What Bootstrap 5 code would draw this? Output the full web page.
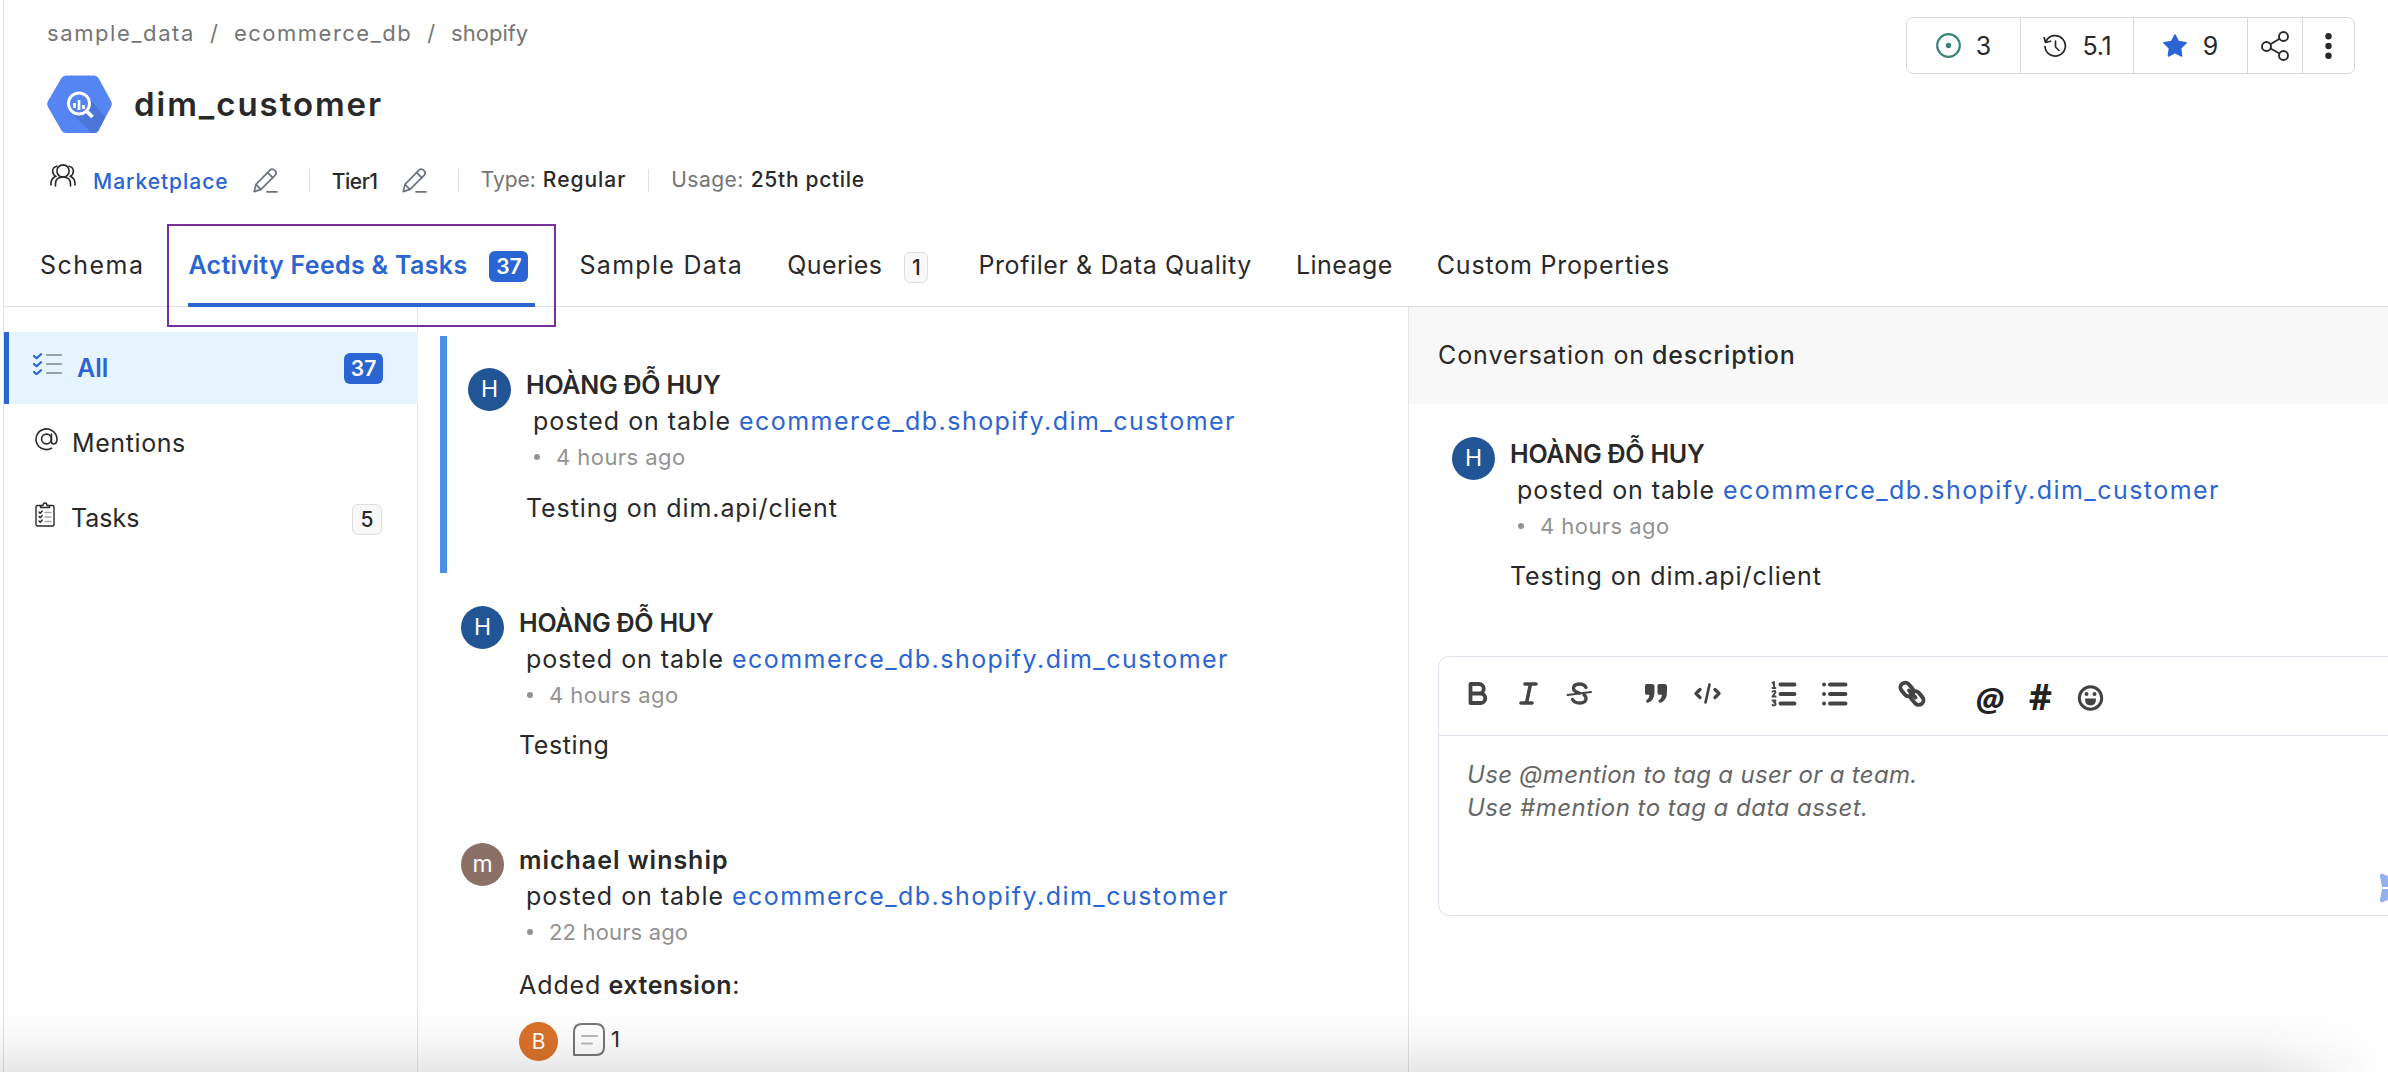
<!DOCTYPE html>
<html lang="en">
<head>
<meta charset="utf-8">
<meta name="viewport" content="width=device-width, initial-scale=1">
<title>dim_customer</title>
<link href="https://cdn.jsdelivr.net/npm/bootstrap@5.3.0/dist/css/bootstrap.min.css" rel="stylesheet">
<style>
  :root { --ink:#292929; --brand:#2b65d3; --line:#e0e0e0; --muted:#757575; }
  body { font-family:Inter,"Noto Sans",sans-serif; font-size:25px; line-height:36px; color:var(--ink); background:#fff; overflow:hidden; }
  svg { display:block; flex:none; }
  .app-shell { height:1072px; margin-left:3px; border-left:1px solid var(--line); }
  .page-head { height:224px; padding:15px 33px 0 43px; }
  .crumbs { font-size:22px; color:var(--muted); height:60px; }
  .crumbs .slash { margin:0 16px 0 15px; }
  .asset-title { font-size:33px; font-weight:600; letter-spacing:1.95px; margin:0 0 0 22px; line-height:58px; }
  .meta-row { font-size:21px; height:40px; margin-top:27px; line-height:40px; white-space:nowrap; }
  .meta-row .rule { width:1px; height:23px; background:var(--line); margin:0 22px; flex:none; }
  .meta-row .rule.wide { margin-left:31px; }
  .meta-row .label { color:var(--muted); }
  .meta-row .owner { color:var(--brand); margin-left:17px; }
  .semi { font-weight:500; }
  .stat-group { height:57px; margin-top:2px; border:1px solid #d9d9d9; border-radius:7px; }
  .stat-group > div { border-right:1px solid #d9d9d9; }
  .stat-group > div:last-child { border-right:0; }
  .s-a { width:114px; gap:15px; } .s-b { width:113px; gap:16px; } .s-c { width:114px; gap:16px; } .s-d { width:55px; } .s-e { width:51px; }
  .tab-bar { height:83px; border-bottom:1px solid var(--line); padding-left:36px; gap:44px; flex-wrap:nowrap; }
  .tab-bar .nav-link { padding:0; height:82px; color:var(--ink); white-space:nowrap; display:flex; align-items:center; position:relative; }
  .tab-bar .nav-link.active { color:var(--brand); font-weight:600; }
  .tab-bar .nav-link.active::after { content:""; position:absolute; left:0; right:0; bottom:-1px; height:4px; background:var(--brand); }
  .highlight-box { position:absolute; left:-21px; top:0; width:389px; height:103px; border:2px solid #76309b; z-index:3; }
  .count { font-size:21px; line-height:31px; height:31px; border-radius:6px; text-align:center; font-weight:600; flex:none; }
  .count.on { background:var(--brand); color:#fff; width:39px; }
  .count.off { background:#f8f8f8; border:1px solid #dedede; color:var(--ink); line-height:29px; font-weight:500; }
  .side-nav { width:414px; padding-top:25px; border-right:1px solid #e4e4e4; gap:3px; flex:none; }
  .side-nav a { height:72px; color:var(--ink); text-decoration:none; padding:0 35px 0 31px; }
  .side-nav a.current { background:#e6f4ff; border-left:5px solid var(--brand); color:var(--brand); font-weight:600; padding-left:24px; margin-right:-1px; }
  .side-nav a > span:not(.count) { margin-top:-1px; }
  .feed { width:990px; padding:29px 0 0 22px; flex:none; }
  .post { height:237.5px; padding:31px 0 0 21px; gap:15px; white-space:nowrap; }
  .post.chosen { border-left:7px solid #4a90e8; height:237px; margin-bottom:.5px; }
  .avatar { width:43px; height:43px; border-radius:50%; color:#fff; font-size:23px; line-height:43px; text-align:center; background:#225595; flex:none; margin-top:1px; }
  .avatar.brown { background:#8a7066; }
  .avatar.orange { background:#db732b; width:39px; height:39px; line-height:39px; font-size:21px; margin-top:0; }
  .post-name { font-weight:600; }
  .post-line { padding-left:7px; }
  .post-line a { color:var(--brand); text-decoration:none; margin-left:8px; }
  .post-time { font-size:22px; color:#929292; padding-left:8px; }
  .post-time i { width:6px; height:6px; border-radius:50%; background:#929292; margin-right:16px; }
  .post-body { margin-top:14.5px; }
  .thread { border-left:1px solid #e4e4e4; min-width:0; }
  .thread-head { height:97px; background:#f8f8f8; padding-left:29px; line-height:97px; }
  .thread .post { height:252px; padding:32px 0 0 43px; }
  .thread .post-body { margin-top:13.5px; }
  .editor { height:260px; margin:0 -20px 0 29px; border:1px solid #dde1e9; border-radius:11px; }
  .toolbar { height:79px; border-bottom:1px solid #dde1e9; padding:1px 0 0 13px; }
  .tool { width:51px; display:flex; justify-content:center; align-items:center; }
  .tool-set { display:flex; margin-right:26px; }
  .tool svg { stroke:#444; fill:none; stroke-linecap:round; stroke-linejoin:round; }
  .tool .solid { fill:#444; stroke:none; }
  .glyph { font:700 33px/40px "Noto Sans","Open Sans",sans-serif; color:#222; }
  .glyph.hash { font-size:36px; }
  .hint { font-size:24px; line-height:33px; font-style:italic; color:#666; padding:22px 0 0 28px; }
  .send { right:2px; bottom:12px; }
  .bottom-shade { position:absolute; left:0; right:0; bottom:0; height:62px; pointer-events:none; background:linear-gradient(to bottom,rgba(0,0,0,0),rgba(0,0,0,.03) 50%,rgba(0,0,0,.095)); -webkit-mask-image:linear-gradient(to right,#000 2260px,transparent 2385px); mask-image:linear-gradient(to right,#000 2260px,transparent 2385px); }
  .t160{letter-spacing:1.6px}.t150{letter-spacing:1.5px}.t144{letter-spacing:1.46px}.t124{letter-spacing:1.3px}.t97{letter-spacing:.97px}.t89{letter-spacing:.92px}.t80{letter-spacing:.8px}.t58{letter-spacing:.6px}.t48{letter-spacing:.48px}.t42{letter-spacing:.45px}.t32{letter-spacing:.32px}.tn{letter-spacing:-.25px}.tt{letter-spacing:-.43px}
</style>
</head>
<body>
<svg width="0" height="0" class="position-absolute" aria-hidden="true">
  <symbol id="pencil" viewBox="0 0 25 25"><g fill="none" stroke="#6b7280" stroke-width="1.7" stroke-linejoin="round" stroke-linecap="round"><path d="M1.2 23.6 3 16.4 17 2.2q2.200-2.200 4.800.2t.3 4.900L8 21.400Z"/><path d="m14.700 4.600 5 5M3.200 16.600l4.600 4.700M14 23.800h10"/></g></symbol>
</svg>
<div class="app-shell d-flex flex-column">
  <header class="page-head d-flex justify-content-between">
    <div>
      <nav class="crumbs d-flex" aria-label="breadcrumb">
        <span class="t160">sample_data</span><span class="slash">/</span><span class="t150">ecommerce_db</span><span class="slash">/</span><span>shopify</span>
      </nav>
      <div class="d-flex align-items-center">
        <svg width="65" height="58" viewBox="0 0 65 58"><path d="M19 .5H47q3 0 4.500 2.500L64 26q1.500 3 0 6L51.500 55.500Q50 58 47 58H19q-3 0-4.500-2.500L1 32q-1.500-3 0-6L14.500 3Q16 .5 19 .5Z" fill="#5585f3"/><path d="M43 24 58 42.500 51.500 55.500Q50 58 47 58H45L23 37Z" fill="#4b76d8"/><circle cx="32" cy="28.500" r="10.500" fill="#5585f3" stroke="#fff" stroke-width="2.900"/><path d="m39.500 36 6 6" stroke="#fff" stroke-width="3.800"/><path d="M27.500 28v5M32 25v10M36.500 30v4" stroke="#fff" stroke-width="2.700"/></svg>
        <h1 class="asset-title">dim_customer</h1>
      </div>
      <div class="meta-row d-flex align-items-center">
        <svg class="mb-2" style="margin-left:3px" width="26" height="24" viewBox="0 0 26 24" fill="none" stroke="#292929" stroke-width="1.600" stroke-linecap="round"><circle cx="13" cy="7" r="6.100"/><path d="M5.500 22v-2q0-7 7.500-7t7.500 7v2M7 2.200Q3 3 2.600 7q0 3.500 2.900 5.200Q1 14.500 1 19.500V21M19 2.200Q23 3 23.400 7q0 3.500-2.900 5.200Q25 14.500 25 19.500V21"/></svg>
        <span class="t97 semi owner pt-1">Marketplace</span>
        <svg class="ms-4" width="25" height="25"><use href="#pencil"/></svg>
        <span class="rule wide"></span>
        <span class="tt semi pt-1">Tier1</span>
        <svg class="ms-4" width="25" height="25"><use href="#pencil"/></svg>
        <span class="rule wide"></span>
        <span class="label">Type:</span><span class="t97 semi" style="margin-left:7px">Regular</span>
        <span class="rule"></span>
        <span class="label t42">Usage:</span><span class="semi" style="margin-left:7px;letter-spacing:.7px">25th pctile</span>
      </div>
    </div>
    <div class="stat-group d-flex align-self-start">
      <div class="s-a d-flex align-items-center justify-content-center"><svg width="25" height="25" viewBox="0 0 25 25"><circle cx="12.500" cy="12.500" r="11.300" fill="none" stroke="#3a8478" stroke-width="2.200"/><circle cx="12.500" cy="12.500" r="2.700" fill="#3a8478"/></svg><span>3</span></div>
      <div class="s-b d-flex align-items-center justify-content-center"><svg width="24" height="24" viewBox="0 0 24 24" fill="none" stroke="#292929" stroke-width="1.700" stroke-linecap="round" stroke-linejoin="round"><path d="M3.200 7A10.200 10.200 0 1 1 2 12.500M1.200 3.500l1.300 5 5-1.300M12.500 7v6l3.500 3.500"/></svg><span class="tn">5.1</span></div>
      <div class="s-c d-flex align-items-center justify-content-center"><svg width="24" height="23" viewBox="0 0 23 22"><path d="m11.500 1 3.300 6.300 7.200 1.200-5.200 5.100 1 7.400-6.300-3.300L5.200 21l1-7.400L1 8.500l7.200-1.200Z" fill="#2b65d3" stroke="#2b65d3" stroke-width="1.500" stroke-linejoin="round"/></svg><span>9</span></div>
      <div class="s-d d-flex align-items-center justify-content-center"><svg width="28" height="30" viewBox="0 0 28 30" fill="none" stroke="#292929" stroke-width="1.900"><circle cx="5.500" cy="15.500" r="4.500"/><circle cx="22.500" cy="5.500" r="4.500"/><circle cx="22.500" cy="24.500" r="4.500"/><path d="m9.400 13.200 9.200-5.400M9.500 17.500l9 5"/></svg></div>
      <div class="s-e d-flex align-items-center justify-content-center"><svg width="7" height="26" viewBox="0 0 7 26" fill="#292929"><circle cx="3.500" cy="3.300" r="3.200"/><circle cx="3.500" cy="13" r="3.200"/><circle cx="3.500" cy="22.700" r="3.200"/></svg></div>
    </div>
  </header>

  <nav class="nav tab-bar flex-shrink-0">
    <a class="nav-link t144" href="#">Schema</a>
    <a class="nav-link active" href="#"><span class="t32">Activity Feeds &amp; Tasks</span><span class="count on" style="margin:2px 7px 0 22px">37</span><span class="highlight-box"></span></a>
    <a class="nav-link t124" href="#">Sample Data</a>
    <a class="nav-link" href="#"><span class="t42">Queries</span><span class="count off" style="width:24px;margin:5px 6px 0 22px">1</span></a>
    <a class="nav-link t58" href="#">Profiler &amp; Data Quality</a>
    <a class="nav-link t42" href="#">Lineage</a>
    <a class="nav-link t80" href="#">Custom Properties</a>
  </nav>

  <main class="d-flex flex-grow-1 overflow-hidden">
    <aside class="side-nav d-flex flex-column">
      <a class="current d-flex align-items-center" href="#">
        <svg class="mb-2" width="29" height="22" viewBox="0 0 29 22" fill="none" stroke-linecap="round" stroke-linejoin="round"><g stroke="#2b65d3" stroke-width="2.200"><path d="m1 3 2.500 2.200L8 1.200M1 11l2.500 2.200L8 9.200M1 19l2.500 2.200L8 17.200"/></g><path d="M14 2h14M14 11h14M14 20h14" stroke="#94a0a8" stroke-width="2.200"/></svg>
        <span style="margin-left:15px">All</span><span class="count on ms-auto">37</span>
      </a>
      <a class="d-flex align-items-center" href="#">
        <svg class="mb-2" width="23" height="23" viewBox="0 0 23 23" fill="none" stroke="#292929" stroke-width="1.600" stroke-linecap="round"><circle cx="11.500" cy="11" r="4.900"/><path d="M16.400 6v7.500q0 2.500 2.500 2.500 3.100-.3 3.100-5A10.500 10.300 0 1 0 16.500 20.300"/></svg>
        <span class="t58" style="margin-left:14px">Mentions</span>
      </a>
      <a class="d-flex align-items-center" href="#">
        <svg class="mb-2" width="20" height="25" viewBox="0 0 20 25" fill="none" stroke="#292929" stroke-width="1.400" stroke-linecap="round" stroke-linejoin="round"><path d="M5.500 3.500H2.500Q1 3.500 1 5v17.500Q1 24 2.500 24h15q1.500 0 1.500-1.500V5q0-1.500-1.500-1.500h-3M5.500 5.500v-2H8q.2-2.500 2-2.500t2 2.500h2.500v2Z"/><path d="m4 10 1.200 1.200L7.200 9M4 14.500l1.200 1.200 2-2.200M4 19l1.200 1.200 2-2.200"/><path d="M10 10.500h6M10 15h6M10 19.500h6" stroke="#aaa"/></svg>
        <span style="margin-left:16px">Tasks</span><span class="count off ms-auto" style="width:30px;margin-top:3px">5</span>
      </a>
    </aside>

    <section class="feed">
      <article class="post chosen d-flex">
        <div class="avatar">H</div>
        <div>
          <div class="post-name tn">HOÀNG ĐỖ HUY</div>
          <div class="post-line"><span class="t97">posted on table</span><a class="t144" href="#">ecommerce_db.shopify.dim_customer</a></div>
          <div class="post-time d-flex align-items-center"><i></i><span class="t42">4 hours ago</span></div>
          <div class="post-body t89">Testing on dim.api/client</div>
        </div>
      </article>
      <article class="post d-flex">
        <div class="avatar">H</div>
        <div>
          <div class="post-name tn">HOÀNG ĐỖ HUY</div>
          <div class="post-line"><span class="t97">posted on table</span><a class="t144" href="#">ecommerce_db.shopify.dim_customer</a></div>
          <div class="post-time d-flex align-items-center"><i></i><span class="t42">4 hours ago</span></div>
          <div class="post-body t58">Testing</div>
        </div>
      </article>
      <article class="post d-flex">
        <div class="avatar brown">m</div>
        <div>
          <div class="post-name t97">michael winship</div>
          <div class="post-line"><span class="t97">posted on table</span><a class="t144" href="#">ecommerce_db.shopify.dim_customer</a></div>
          <div class="post-time d-flex align-items-center"><i></i><span style="letter-spacing:.15px">22 hours ago</span></div>
          <div class="post-body" style="margin-top:16.5px"><span class="t89">Added</span> <b class="t58" style="font-weight:600">extension</b>:</div>
          <div class="d-flex align-items-center" style="margin-top:19px">
            <div class="avatar orange">B</div>
            <svg style="margin:0 0 3px 15px" width="32" height="33" viewBox="0 0 32 33" fill="none" stroke="#777" stroke-width="2" stroke-linecap="round" stroke-linejoin="round"><path d="M1 32V9Q1 1 9 1h14q8 0 8 8v15q0 8-8 8Z"/><path d="M9 13h15M9 20.500h10" stroke="#bbb"/></svg>
            <span style="margin-left:6px;font-size:22px;margin-top:-4px">1</span>
          </div>
        </div>
      </article>
    </section>

    <section class="thread flex-grow-1">
      <div class="thread-head"><span class="t89">Conversation on</span> <span class="t80 semi">description</span></div>
      <article class="post d-flex">
        <div class="avatar">H</div>
        <div>
          <div class="post-name tn">HOÀNG ĐỖ HUY</div>
          <div class="post-line"><span class="t97">posted on table</span><a class="t144" href="#">ecommerce_db.shopify.dim_customer</a></div>
          <div class="post-time d-flex align-items-center"><i></i><span class="t42">4 hours ago</span></div>
          <div class="post-body t89">Testing on dim.api/client</div>
        </div>
      </article>
      <div class="editor position-relative">
        <div class="toolbar d-flex">
          <div class="tool-set">
            <div class="tool"><svg width="40" height="40" stroke-width="3.800"><path d="M12.500 7h8.500a4.400 4.400 0 0 1 0 9.500H12.500ZM12.500 16.500h10a4.600 4.600 0 0 1 0 9.500H12.500Z"/></svg></div>
            <div class="tool"><svg width="40" height="40" stroke-width="3.600"><path d="M16 7h11M12 26h11M21.500 7l-4 19"/></svg></div>
            <div class="tool"><svg width="40" height="40" stroke-width="3.300"><path d="M26 10.500Q24.500 7 19.500 7q-6 0-6 4.500 0 3 6 4.500M12.500 22.500Q14.500 26 19.500 26q6.500 0 6.500-4.500 0-2.500-2-3.500"/><path d="M7.500 18 31 15" stroke-width="1.900"/></svg></div>
          </div>
          <div class="tool-set">
            <div class="tool"><svg width="40" height="40"><path class="solid" d="M9.500 7H15q2.500 0 2.500 2.500V15q0 8-6 10.500-2 .5-2.500-1 0-1 1-1.800 2.300-1.800 2.500-5H9.500Q8 17.700 8 16V8.500Q8 7 9.500 7ZM22 7h5.500q2.500 0 2.500 2.500V15q0 8-6 10.500-2 .5-2.500-1 0-1 1-1.800 2.300-1.800 2.500-5H22q-1.500 0-1.500-1.700V8.500Q20.500 7 22 7Z"/></svg></div>
            <div class="tool"><svg width="40" height="40" stroke-width="3.300"><path d="m12 12.500-4 4 4 4M27 12.500l4 4-4 4"/><path d="m21.500 7.500-4 18" stroke-width="2.700"/></svg></div>
          </div>
          <div class="tool-set">
            <div class="tool"><svg width="40" height="40" stroke-width="3.900"><path d="M15.500 7.500h14M15.500 17h14M15.500 26.500h14"/><g stroke-width="1.900"><path d="m7.500 6 1.500-1v6M7.500 11h3M7.500 14.500q3-1.500 3 .8L7.500 19.500h3.200M7.500 23.500h3l-1.500 2q2 0 1.500 2-1 1.500-3 .5"/></g></svg></div>
            <div class="tool"><svg width="40" height="40" stroke-width="3.900"><path d="M14 7.500h15.500M14 17h15.500M14 26.500h15.500M8 7.500h.1M8 17h.1M8 26.500h.1"/></svg></div>
          </div>
          <div class="tool-set">
            <div class="tool"><svg width="40" height="40" stroke-width="3.900"><rect x="6.500" y="7.800" width="15" height="9.500" rx="4.700" transform="rotate(50 14 12.500)"/><rect x="16.500" y="16.300" width="15" height="9.500" rx="4.700" transform="rotate(50 24 21)"/><path d="m16 13.500 6.500 7"/></svg></div>
          </div>
          <div class="tool-set">
            <div class="tool"><span class="glyph fst-italic pt-1">@</span></div>
            <div class="tool"><span class="glyph hash">#</span></div>
            <div class="tool"><svg width="40" height="40"><circle cx="18.500" cy="21" r="11.200" stroke-width="3"/><g class="solid"><circle cx="14.500" cy="17" r="2"/><circle cx="22.500" cy="17" r="2"/><path d="M13 21.500h11q0 7-5.500 7t-5.500-7Z"/></g></svg></div>
          </div>
        </div>
        <div class="hint"><div class="t32">Use @mention to tag a user or a team.</div><div class="t48">Use #mention to tag a data asset.</div></div>
        <svg class="position-absolute send" style="right:1px" width="26" height="30" viewBox="0 0 26 30" fill="#94b0eb"><path d="M0 3q0-3 3-2L26 11v3H2ZM2 16h24v3L3 29q-3 1-3-2Z"/></svg>
      </div>
    </section>
  </main>
</div>
<div class="bottom-shade"></div>
<script src="https://cdn.jsdelivr.net/npm/bootstrap@5.3.0/dist/js/bootstrap.bundle.min.js"></script>
</body>
</html>
